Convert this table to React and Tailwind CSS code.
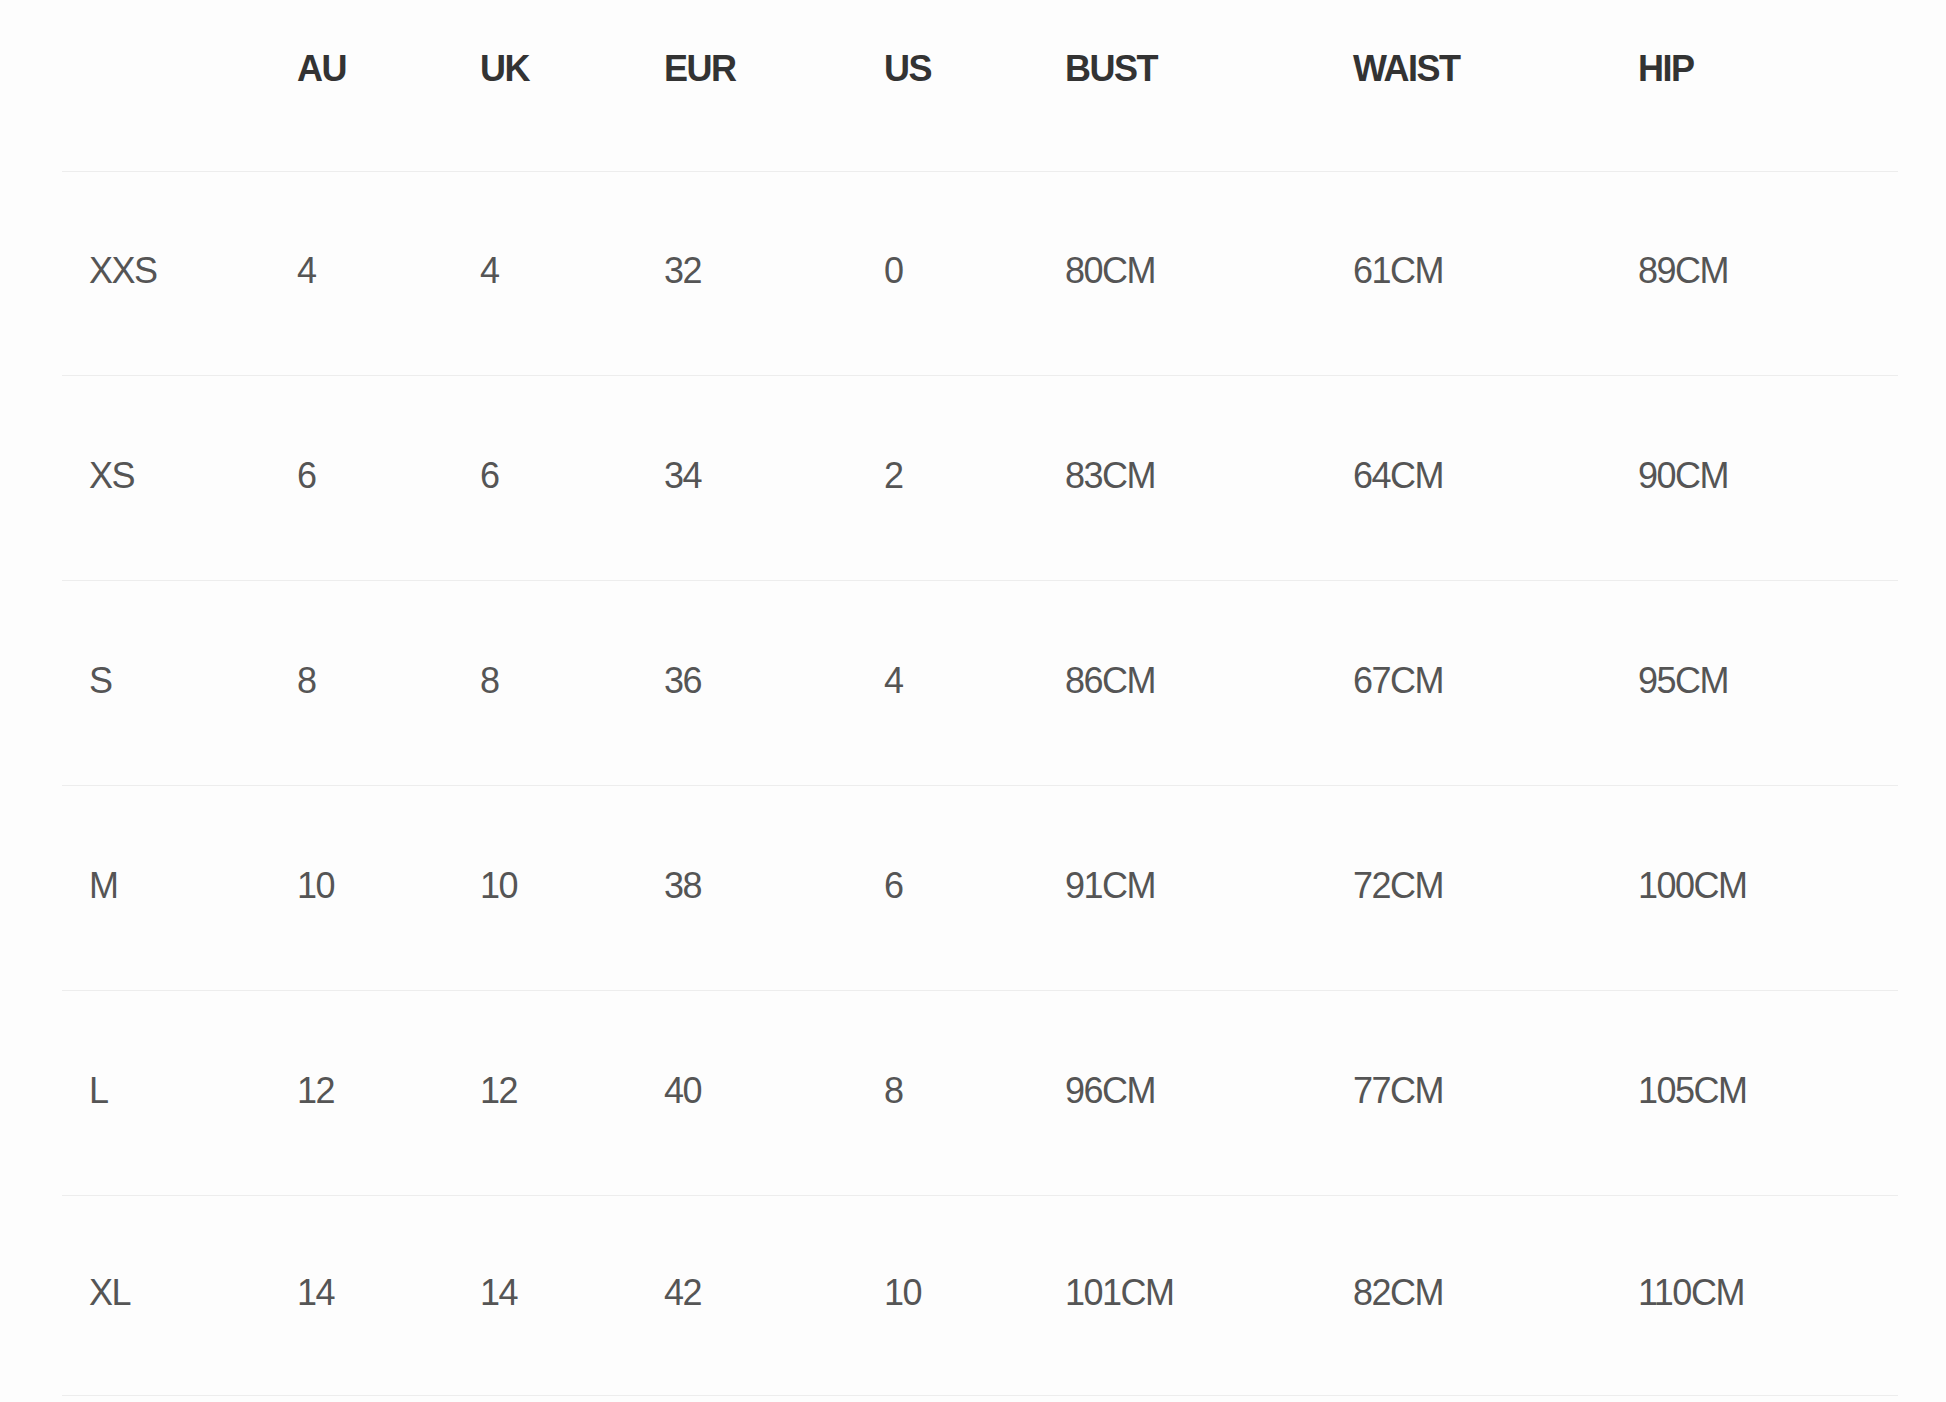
const COLS = ['', 'AU', 'UK', 'EUR', 'US', 'BUST', 'WAIST', 'HIP']

const ROWS = [
  ['XXS', '4', '4', '32', '0', '80CM', '61CM', '89CM'],
  ['XS', '6', '6', '34', '2', '83CM', '64CM', '90CM'],
  ['S', '8', '8', '36', '4', '86CM', '67CM', '95CM'],
  ['M', '10', '10', '38', '6', '91CM', '72CM', '100CM'],
  ['L', '12', '12', '40', '8', '96CM', '77CM', '105CM'],
  ['XL', '14', '14', '42', '10', '101CM', '82CM', '110CM'],
]

// row heights tuned to the reference's rule spacing
const HEIGHTS = ['h-[204px]', 'h-[205px]', 'h-[205px]', 'h-[205px]', 'h-[205px]', 'h-[200px]']

const grid = 'grid grid-cols-[208px_183px_184px_220px_181px_288px_285px_1fr]'

export default function App() {
  return (
    <div
      className="min-h-[1402px] w-full bg-[#fdfdfd] pl-[62px] pr-[48px]"
      style={{ fontFamily: '"Liberation Sans", Arial, Helvetica, sans-serif' }}
    >
      <div className={`${grid} h-[172px] border-b border-[#ededed] pt-[51px]`}>
        {COLS.map((c, i) => (
          <div key={i} className="pl-[27px] text-[36px] leading-none font-bold tracking-[-1.5px] text-[#333]">
            {c}
          </div>
        ))}
      </div>

      {ROWS.map((row, r) => (
        <div key={row[0]} className={`${grid} ${HEIGHTS[r]} items-center border-b border-[#ededed] pb-[5px]`}>
          {row.map((v, i) => (
            <div key={i} className="pl-[27px] text-[36px] leading-none tracking-[-1.5px] text-[#555]">
              {v}
            </div>
          ))}
        </div>
      ))}
    </div>
  )
}
